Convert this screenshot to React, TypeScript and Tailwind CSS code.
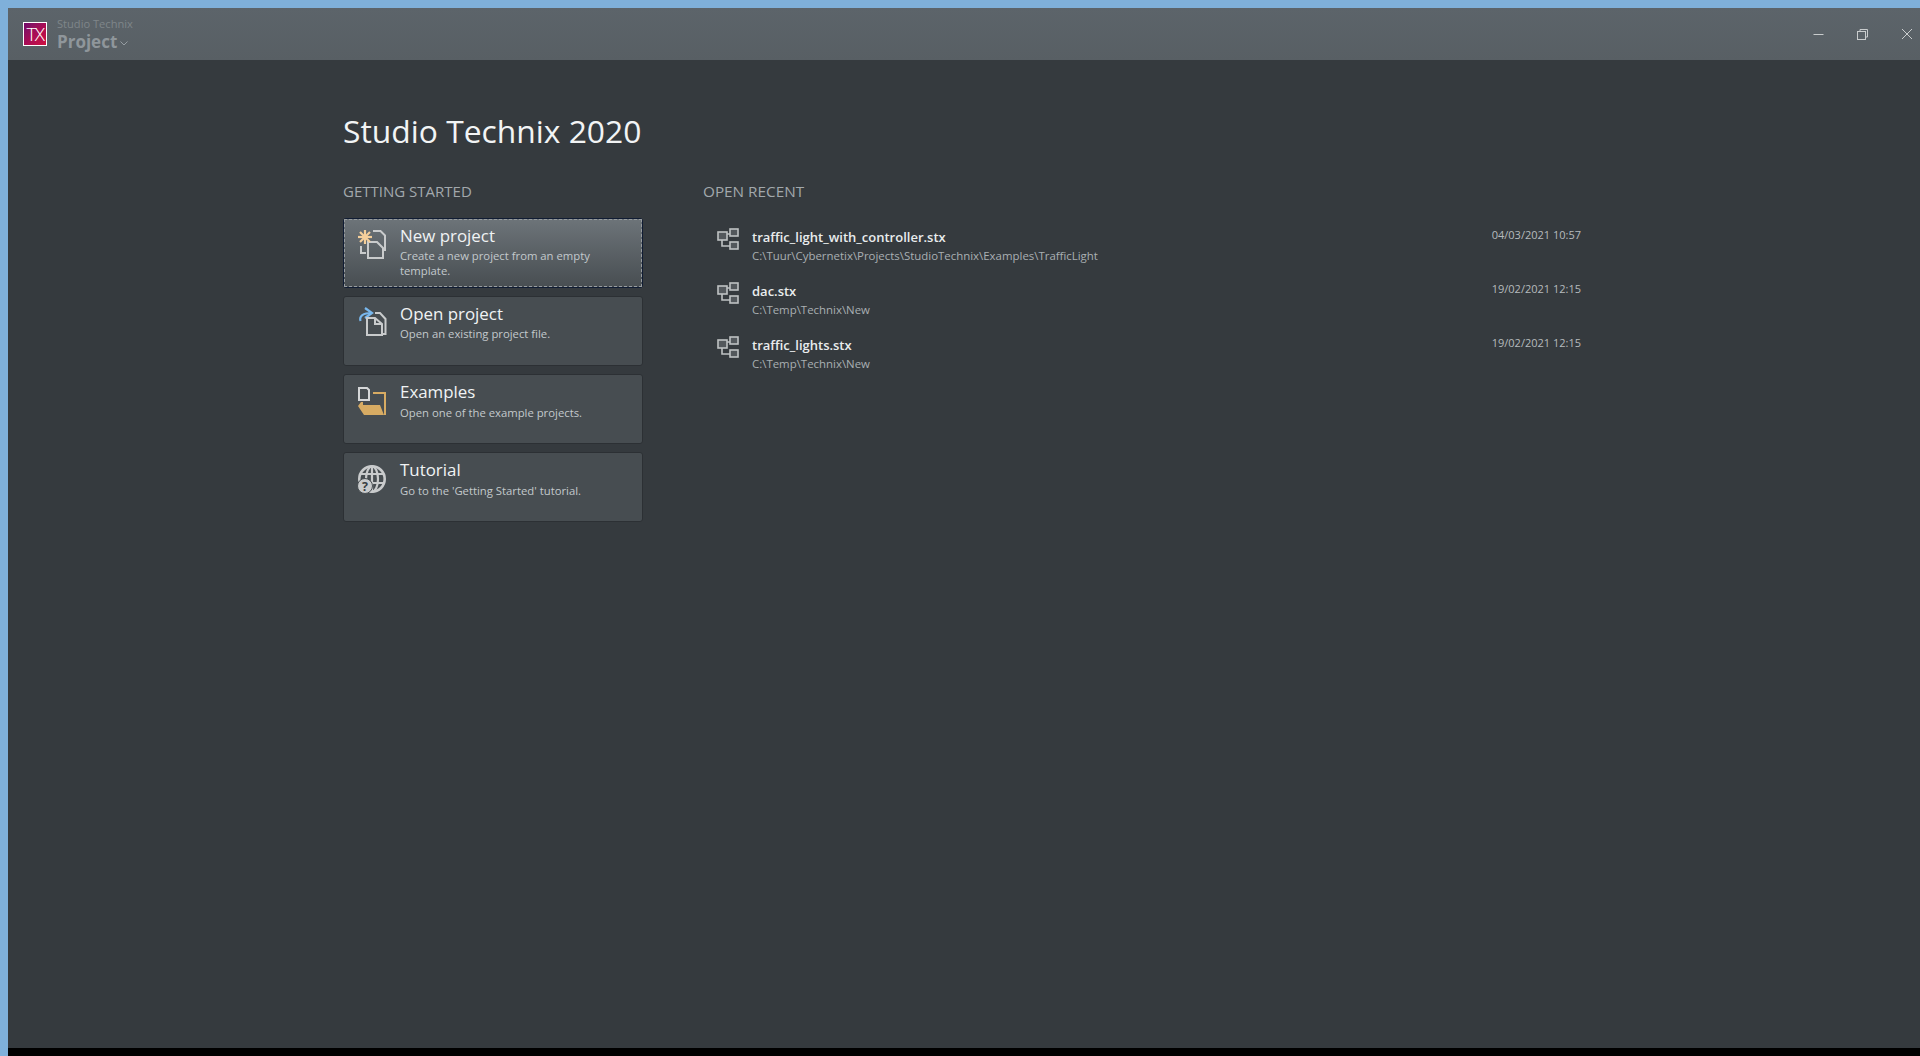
const cardIconClass = "shrink-0 mt-[5.5px] overflow-visible";

function NewIcon() {
  return (
    <svg width="28" height="28" viewBox="0 0 28 28" fill="none" className={cardIconClass}>
      <path d="M15 1H22.5L27 5.5V21" stroke="#c9cbcc" strokeWidth="2" />
      <path d="M10 12H19L25 18V28H10V12Z" stroke="#c9cbcc" strokeWidth="2" />
      <path d="M3 16V23H8" stroke="#c9cbcc" strokeWidth="2" />
      <g stroke="#f5cf9a" strokeWidth="2.2">
        <path d="M7 0V14" />
        <path d="M0 7H14" />
        <path d="M2 2L12 12" />
        <path d="M12 2L2 12" />
      </g>
    </svg>
  );
}

function OpenIcon() {
  return (
    <svg width="28" height="28" viewBox="0 1 28 28" fill="none" className={cardIconClass}>
      <path d="M2.5 14C1 9 5 6 14 6" stroke="#79b8ee" strokeWidth="2.2" />
      <path d="M7 1L14 6L7 11" stroke="#79b8ee" strokeWidth="2.2" />
      <path d="M17 6H22L27.5 12V27H25" stroke="#c9cbcc" strokeWidth="2" />
      <path d="M9 11H17L24 17V28H9V11Z" stroke="#c9cbcc" strokeWidth="2" />
      <path d="M17 11V17H24" stroke="#c9cbcc" strokeWidth="2" />
    </svg>
  );
}

function ExamplesIcon() {
  return (
    <svg width="28" height="28" viewBox="0 0 28 28" fill="none" className={cardIconClass}>
      <path d="M1 1H9L11 3V13H1V1Z" stroke="#d5d7d8" strokeWidth="2" />
      <path d="M15 6H27V28" stroke="#d7ab63" strokeWidth="2" />
      <path d="M0 19L3 15H5V18H22L26 28H6L0 19Z" fill="#d7ab63" />
    </svg>
  );
}

function TutorialIcon() {
  return (
    <svg width="28" height="28" viewBox="0 0 28 28" fill="none" className={cardIconClass}>
      <circle cx="14" cy="14" r="12.7" stroke="#c9cbcc" strokeWidth="2.6" />
      <ellipse cx="14" cy="14" rx="6" ry="12.7" stroke="#c9cbcc" strokeWidth="2.2" />
      <path d="M2 9H26M2 18H26M14 1V27" stroke="#c9cbcc" strokeWidth="2.2" />
      <circle cx="7" cy="21" r="7.5" fill="#c9cbcc" stroke="#474d51" strokeWidth="1" />
      <text x="7" y="25.5" textAnchor="middle" fontSize="12.5" fontWeight="700" fontFamily="'Open Sans', sans-serif" fill="#3a3f43">?</text>
    </svg>
  );
}

function ProjectIcon() {
  return (
    <svg width="22" height="22" viewBox="0 0 22 22" fill="none" className="shrink-0">
      <rect x="1" y="4" width="9" height="8" fill="#53585c" stroke="#bfc2c3" strokeWidth="1.6" />
      <rect x="13" y="1" width="8" height="7" fill="#53585c" stroke="#bfc2c3" strokeWidth="1.6" />
      <rect x="13" y="14" width="8" height="7" fill="#53585c" stroke="#bfc2c3" strokeWidth="1.6" />
      <path d="M10 6H13M5 12V18H13" stroke="#bfc2c3" strokeWidth="1.6" />
    </svg>
  );
}

const cards = [
  { title: "New project", desc: "Create a new project from an empty template.", icon: <NewIcon />, active: true },
  { title: "Open project", desc: "Open an existing project file.", icon: <OpenIcon /> },
  { title: "Examples", desc: "Open one of the example projects.", icon: <ExamplesIcon /> },
  { title: "Tutorial", desc: "Go to the 'Getting Started' tutorial.", icon: <TutorialIcon /> },
];

const recents = [
  { name: "traffic_light_with_controller.stx", path: "C:\\Tuur\\Cybernetix\\Projects\\StudioTechnix\\Examples\\TrafficLight", date: "04/03/2021 10:57" },
  { name: "dac.stx", path: "C:\\Temp\\Technix\\New", date: "19/02/2021 12:15" },
  { name: "traffic_lights.stx", path: "C:\\Temp\\Technix\\New", date: "19/02/2021 12:15" },
];

function Card({ title, desc, icon, active }: { title: string; desc: string; icon: React.ReactNode; active?: boolean }) {
  const outer = active
    ? "border-[#101c33] bg-gradient-to-b from-[#6d7479] to-[#484e52]"
    : "border-[#2c3034] bg-[#474d51]";
  return (
    <div className={`h-[70px] w-[300px] rounded-[3px] border ${outer}`}>
      <div className={`flex h-full gap-[14px] pl-[13px] pt-[5px] ${active ? "border border-dashed border-[#979c9f]" : "border border-transparent"}`}>
        {icon}
        <div className="min-w-0 flex-1 pr-[20px]">
          <div className="text-[16.9px] leading-[22px] text-[#f0f3f4]">{title}</div>
          <div className="mt-[1.5px] text-[11.3px] leading-[15px] text-[#c3c9cc]">{desc}</div>
        </div>
      </div>
    </div>
  );
}

export default function App() {
  return (
    <div className="flex h-[1056px] w-[1920px] flex-col overflow-hidden bg-[#7fb0da] pl-2 pt-2 font-['Open_Sans','Noto_Sans',sans-serif]">
      <header className="flex h-[52px] shrink-0 items-center bg-gradient-to-b from-[#5c646a] to-[#585f64] pl-[15px]">
        <div className="flex h-[24px] w-[24px] items-center justify-center border border-white bg-gradient-to-br from-[#70086a] via-[#a80c55] to-[#d0103f] text-[19px] font-light leading-none tracking-[-1.5px] text-white">
          TX
        </div>
        <div className="ml-[10px]">
          <div className="text-[11.1px] leading-[14px] text-[#7f868a]">Studio Technix</div>
          <div className="mt-[1px] flex items-center gap-[3px] text-[17px] font-bold leading-[20px] text-[#8f969b]">
            Project
            <svg width="8" height="5" viewBox="0 0 8 5" fill="none" className="mt-[3px]">
              <path d="M0.5 0.5L4 4L7.5 0.5" stroke="#969da2" />
            </svg>
          </div>
        </div>
        <div className="ml-auto flex items-center gap-[33px] pr-[7px]">
          <svg width="11" height="11" viewBox="0 0 11 11" fill="none">
            <path d="M0.5 5.5H10.5" stroke="#c9cccd" />
          </svg>
          <svg width="11" height="11" viewBox="0 0 11 11" fill="none">
            <rect x="0.5" y="2.5" width="8" height="8" stroke="#c9cccd" />
            <path d="M3 2.5V0.5H10.5V8H8.5" stroke="#c9cccd" />
          </svg>
          <svg width="12" height="12" viewBox="0 0 12 12" fill="none">
            <path d="M1 1L11 11M11 1L1 11" stroke="#c9cccd" />
          </svg>
        </div>
      </header>

      <main className="flex-1 bg-[#353a3e] pl-[335px]">
        <h1 className="mt-[49px] text-[31.8px] font-normal leading-[44px] text-[#f2f4f5]">Studio Technix 2020</h1>
        <div className="mt-[28px] flex">
          <section className="w-[360px]">
            <h2 className="text-[15px] font-normal leading-[20px] text-[#a2a8ac]">GETTING STARTED</h2>
            <div className="mt-[16.5px] flex flex-col gap-[8.3px]">
              {cards.map((c) => (
                <Card key={c.title} {...c} />
              ))}
            </div>
          </section>
          <section className="w-[878px]">
            <h2 className="text-[15.3px] font-normal leading-[20px] text-[#a2a8ac]">OPEN RECENT</h2>
            <div className="mt-[25.5px] flex flex-col gap-[16px] pl-[14px]">
              {recents.map((r) => (
                <div key={r.name} className="flex h-[38px] items-start">
                  <div className="mt-[1.5px]">
                    <ProjectIcon />
                  </div>
                  <div className="ml-[13px] flex-1">
                    <div className="text-[13px] font-semibold leading-[20px] text-[#e9eced]">{r.name}</div>
                    <div className="mt-[1px] text-[11.43px] leading-[16px] text-[#a9afb2]">{r.path}</div>
                  </div>
                  <div className="text-[11px] leading-[16px] text-[#b5babd]">{r.date}</div>
                </div>
              ))}
            </div>
          </section>
        </div>
      </main>
      <div className="h-2 shrink-0 bg-black" />
    </div>
  );
}
